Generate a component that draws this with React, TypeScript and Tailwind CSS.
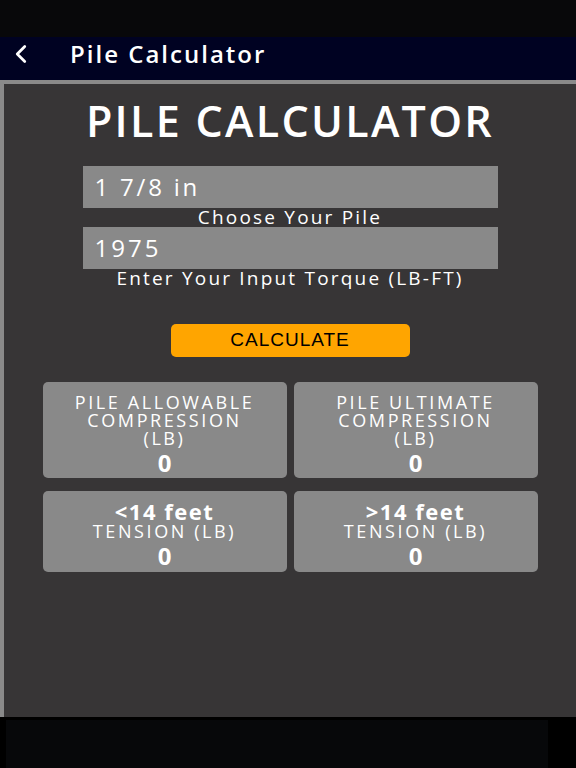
import { ChevronLeft } from 'lucide-react';

const font = { fontFamily: '"Open Sans", "Noto Sans", sans-serif' };

function ResultCard({ lines, bold, value, tall }: { lines: string[]; bold?: string; value: string; tall?: boolean }) {
  return (
    <div
      className={`flex flex-col items-center rounded-[5px] bg-[#898989] text-white ${tall ? 'h-[96px] pt-[11px]' : 'h-[81px] pt-[9px]'}`}
    >
      {bold && <div className="text-[22px] font-bold leading-[22px] tracking-[1.5px]">{bold}</div>}
      {lines.map((l) => (
        <div key={l} className="text-[18px] leading-[18px] tracking-[2.6px]">{l}</div>
      ))}
      <div className="mt-[4px] text-[24px] font-bold leading-[24px]">{value}</div>
    </div>
  );
}

export default function App() {
  return (
    <div className="flex h-[768px] w-[576px] flex-col bg-black" style={font}>
      <div className="h-[37px] bg-[#08080a]" />
      <header className="flex h-[43px] items-center bg-[#000222] pb-[10px] text-white">
        <ChevronLeft className="ml-[6px] h-[30px] w-[30px]" strokeWidth={2.2} />
        <h1 className="ml-[34px] text-[24px] font-semibold leading-[30px] tracking-[2px]">Pile Calculator</h1>
      </header>
      <div className="h-[4px] bg-[#8a8a8a]" />
      <main className="flex flex-1 flex-col items-center border-l-[4px] border-[#8a8a8a] bg-[#373536] text-white">
        <h2 className="mt-[12px] text-[43px] font-semibold leading-[50px] tracking-[2.3px]">PILE CALCULATOR</h2>
        <div className="mt-[20px] w-[415px]">
          <div className="flex h-[42px] items-center bg-[#898989] px-[12px] text-[24px] tracking-[2.8px]">1 7/8 in</div>
          <div className="text-center text-[19px] leading-[19px] tracking-[2.2px]">Choose Your Pile</div>
          <div className="flex h-[42px] items-center bg-[#898989] px-[12px] text-[24px] tracking-[3px]">1975</div>
          <div className="text-center text-[19px] leading-[19px] tracking-[2.2px]">Enter Your Input Torque (LB-FT)</div>
        </div>
        <button
          className="mt-[36px] h-[33px] w-[239px] rounded-[5px] bg-[#ffa500] text-[19px] tracking-[1px] text-black"
          style={{ fontFamily: '"Liberation Sans", Arial, sans-serif' }}
        >
          CALCULATE
        </button>
        <div className="mt-[25px] grid w-[495px] grid-cols-2 gap-x-[7px] gap-y-[13px]">
          <ResultCard tall lines={['PILE ALLOWABLE', 'COMPRESSION', '(LB)']} value="0" />
          <ResultCard tall lines={['PILE ULTIMATE', 'COMPRESSION', '(LB)']} value="0" />
          <ResultCard bold="<14 feet" lines={['TENSION (LB)']} value="0" />
          <ResultCard bold=">14 feet" lines={['TENSION (LB)']} value="0" />
        </div>
      </main>
      <div className="h-[3px] bg-black" />
      <div className="flex h-[48px]">
        <div className="ml-[6px] w-[542px] bg-[#07080a]" />
      </div>
    </div>
  );
}
